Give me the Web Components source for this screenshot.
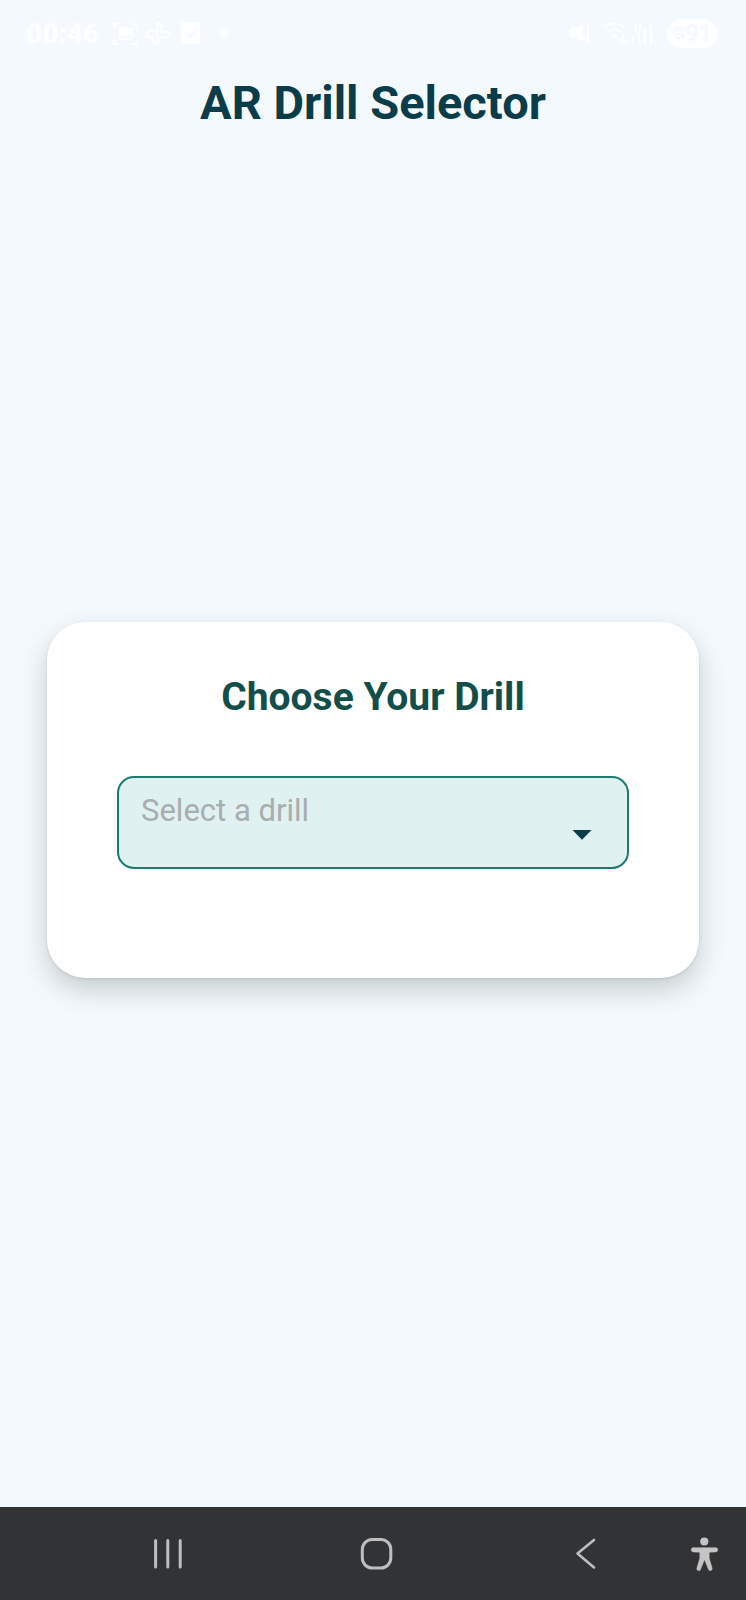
<!DOCTYPE html>
<html lang="en"><head><meta charset="utf-8"><title>AR Drill Selector</title>
<style>html,body{margin:0;height:100%}body{background:#f3f9fc;font-family:Roboto,sans-serif}</style></head>
<body>
<drill-app></drill-app>
<script>
const define=(name,html)=>{const t=document.createElement('template');t.innerHTML=html;
customElements.define(name,class extends HTMLElement{constructor(){super();this.attachShadow({mode:'open'}).append(t.content.cloneNode(true));}});};

define('status-bar',`<style>
:host{display:flex;align-items:center;justify-content:space-between;height:66px;padding:0 28px 0 26px;box-sizing:border-box;color:#fdfeff}
div{display:flex;align-items:center}
.time{font:900 28px/30px Roboto,sans-serif;width:85px;padding-top:2px}
svg{display:block;fill:none;stroke:currentColor;stroke-width:2.2}
.battery{background:#fdfeff;border-radius:15px;width:51px;height:29px;justify-content:center;margin-left:10px;color:#f5f9fb;font:700 23px/29px Roboto,sans-serif}
</style>
<div><span class="time">00:46</span>
<svg width="122" height="30" viewBox="111 18 122 30">
<path d="M114 28v-4h5M131 24h5v5M136 40v4h-5M119 44h-5v-4"/><rect x="120" y="28" width="12" height="11" rx="3"/><path d="M120 29h12v4q-5 5-12 0z" fill="currentColor"/>
<path d="M157 33v-10q6 0 5 9h7q0 7-7 6h-4v6q-7-1-5-7h-6q0-8 6-6h10M157 33v5"/>
<rect x="181" y="22" width="19" height="22" rx="2" fill="currentColor" stroke="none"/><path d="M186 33l4 4 6-7" stroke="#f3f9fc" stroke-width="2"/>
<circle cx="224" cy="33" r="4" fill="currentColor" stroke="none"/></svg></div>
<div><svg width="90" height="32" viewBox="567 17 90 32"><path d="M569 29h5l9-5v18l-9-5h-5z" fill="currentColor" stroke="none"/><path d="M571 25l17 17M588 25v17"/>
<path d="M604 27q10-7 20 0M607 32q7-5 14 0M611 37q3-3 6 0M623 34v8M619 39l4 4 4-4M636 31v-8M640 24v7M633 36v8M639 33v11M645 29v15M651 25v19" stroke-width="1.8"/></svg>
<div class="battery"><svg width="12" height="14" viewBox="0 0 12 14"><path d="M10 4A5 5 0 1 0 11 8M4 8h7"/></svg>91</div></div>`);

define('page-title',`<style>:host{display:block;text-align:center;font-weight:700;font-size:47px;line-height:56px;color:#0b3c49;padding-top:9px}</style><slot></slot>`);

define('drill-select',`<style>:host{display:flex;justify-content:space-between;box-sizing:border-box;width:512px;height:93px;border:2px solid #1c7a6e;border-radius:17px;background:#dff1f1;padding:14px 35px 0 22px;color:#a9adad;font-size:31px;line-height:38px}
svg{margin-top:38px;fill:#0b3c49;display:block}</style><slot></slot><svg width="20" height="10" viewBox="0 0 20 10"><path d="M.5 0h19L10 9.700z"/></svg>`);

define('drill-card',`<style>:host{display:flex;flex-direction:column;align-items:center;box-sizing:border-box;width:652px;height:356px;border-radius:38px;background:#fff;padding-top:52px;box-shadow:0 12px 28px rgba(0,0,0,.18),0 1px 3px rgba(0,0,0,.1)}
h2{margin:0 0 56px;font-size:39px;line-height:46px;color:#134e4a;font-weight:700}</style><h2><slot name="heading"></slot></h2><slot></slot>`);

define('nav-bar',`<style>:host{display:block;height:93px;background:#323335}
svg{display:block;fill:none;stroke:#bebebf;stroke-width:3;stroke-linecap:round;stroke-linejoin:round}</style>
<svg width="746" height="93" viewBox="0 1507 746 93">
<path d="M155.600 1540.500v26.500M167.800 1540.500v26.500M180.200 1540.500v26.500"/>
<rect x="362.300" y="1539.500" width="28.500" height="28.500" rx="10"/>
<path d="M594 1540L577.500 1553.500 594 1567.500" stroke-width="2.600"/>
<g fill="#c4c4c4" stroke="none"><circle cx="704.300" cy="1541.500" r="4.100"/><path d="M693.300 1547.700h22.400a2.100 2.100 0 0 1 0 4.200l-6.500.4v6l2.900 9.800a1.900 1.900 0 0 1-3.700 1.200l-3.600-9h-.6l-3.600 9a1.900 1.900 0 0 1-3.700-1.200l2.900-9.800v-6l-6.500-.4a2.100 2.100 0 0 1 0-4.200z" stroke="#c4c4c4" stroke-width=".5"/></g></svg>`);

define('drill-app',`<style>:host{display:flex;flex-direction:column;height:1600px}
main{flex:1;display:flex;flex-direction:column;align-items:center;padding-top:491px}</style>
<status-bar></status-bar><page-title>AR Drill Selector</page-title>
<main><drill-card><span slot="heading">Choose Your Drill</span><drill-select>Select a drill</drill-select></drill-card></main><nav-bar></nav-bar>`);
</script></body></html>
